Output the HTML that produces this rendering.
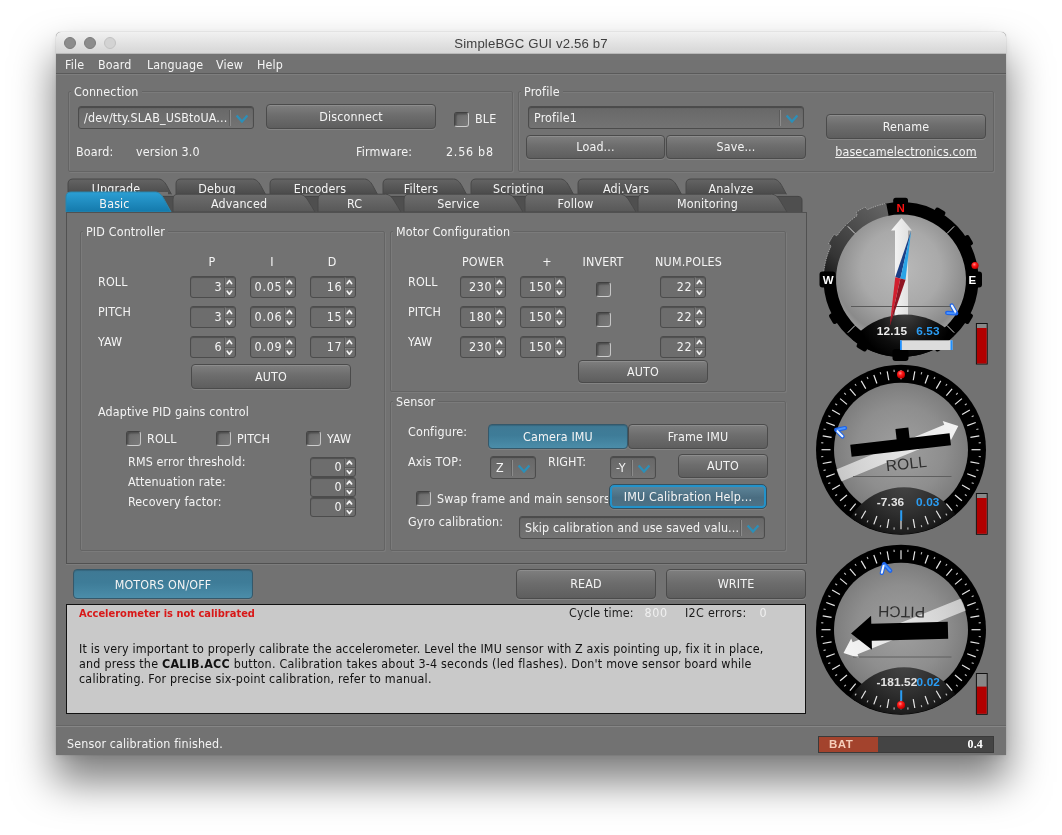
<!DOCTYPE html><html><head><meta charset="utf-8"><title>SimpleBGC GUI v2.56 b7</title><style>
*{box-sizing:border-box}
html,body{margin:0;padding:0}
body{width:1062px;height:835px;background:#fff;position:relative;overflow:hidden;will-change:transform;font-family:"DejaVu Sans Condensed","DejaVu Sans","Liberation Sans",sans-serif;font-size:12.4px;font-stretch:condensed;letter-spacing:.15px;color:#fff}
.abs{position:absolute}
#win{position:absolute;left:56px;top:32px;width:950px;height:723px;background:#727272;border-radius:5px 5px 0 0;box-shadow:0 25px 40px 2px rgba(0,0,0,.5),0 3px 8px rgba(0,0,0,.08),0 0 1px rgba(0,0,0,.45)}
#tb{position:absolute;left:56px;top:32px;width:950px;height:22px;border-radius:5px 5px 0 0;background:linear-gradient(#f1f1f1,#d6d6d6);border-bottom:1px solid #b9b9b9}
#title{position:absolute;left:56px;top:33px;width:950px;height:22px;line-height:22px;text-align:center;color:#404040;font-family:"Liberation Sans",sans-serif;font-size:13.2px}
.tl{position:absolute;top:37px;width:12px;height:12px;border-radius:50%}
.t{position:absolute;white-space:nowrap;line-height:16px;height:16px;color:#f4f4f4}
.c{text-align:center}
.btn{position:absolute;border:1px solid #4b4b4b;border-radius:4px;background:linear-gradient(#7f7f7f,#6d6d6d 45%,#5e5e5e);box-shadow:0 1px 0 rgba(255,255,255,.13),inset 0 1px 0 rgba(255,255,255,.12);text-align:center;color:#f4f4f4;white-space:nowrap}
.btn.blue{background:linear-gradient(#3f7994,#3e7c98 45%,#4b8da9);border-color:#35586a;box-shadow:0 1px 0 rgba(255,255,255,.1),inset 0 1px 1px rgba(0,0,0,.15)}
.btn.focus{background:linear-gradient(#5f879b,#4a6d81 55%,#4d7387);border:1px solid #35505f;border-radius:5px;box-shadow:inset 0 0 0 2px #2292ca,0 1px 0 rgba(255,255,255,.1)}
.grp{position:absolute;border:1px solid #646464;box-shadow:inset 1px 1px 0 rgba(255,255,255,.07),1px 1px 0 rgba(255,255,255,.07);border-radius:2px}
.gt{position:absolute;white-space:nowrap;line-height:16px;height:16px;background:#727272;padding:0 3px;color:#f4f4f4}
.sp{position:absolute;width:46px;height:22px;border:1px solid #4c4c4c;border-radius:3px;background:#6d6d6d;box-shadow:inset 0 1px 1px rgba(0,0,0,.28)}
.sp .v{position:absolute;right:12.6px;top:0;font-size:12.4px;letter-spacing:.75px;color:#f4f4f4}
.sp .d{position:absolute;left:32.5px;top:0;width:1px;height:100%;background:#585858;box-shadow:1px 0 0 rgba(255,255,255,.1)}
.sp .m{position:absolute;left:33.5px;right:0;top:50%;height:1px;background:#5a5a5a;margin-top:-.5px;box-shadow:0 1px 0 rgba(255,255,255,.1)}
.sp svg{position:absolute;left:0;top:0}
.cb{position:absolute;width:15px;height:15px;border-radius:3px;border:1.5px solid;border-color:#404040 #c6c6c6 #cdcdcd #454545;background:linear-gradient(135deg,#6a6a6a,#7a7a7a);box-shadow:inset 1.5px 1.5px 1.5px rgba(0,0,0,.3)}
.combo{position:absolute;height:23px;border:1px solid #4c4c4c;border-radius:3px;background:linear-gradient(#686868,#737373);box-shadow:inset 0 1px 1px rgba(0,0,0,.3)}
.combo .v{position:absolute;left:5px;top:0;line-height:21px;color:#f4f4f4;white-space:nowrap}
.combo .d{position:absolute;right:22.5px;top:3px;bottom:2px;width:1px;background:#8c8c8c;box-shadow:-1px 0 0 rgba(0,0,0,.15)}
.combo svg{position:absolute;right:4px;top:6.5px}
</style></head><body>
<div id="win"></div><div id="tb"></div>
<div id="title">SimpleBGC GUI v2.56 b7</div>
<div class="tl" style="left:64px;background:#8c8c8c;border:1px solid #7c7c7c"></div>
<div class="tl" style="left:84px;background:#8c8c8c;border:1px solid #7c7c7c"></div>
<div class="tl" style="left:104px;background:#d3d3d3;border:1px solid #c2c2c2"></div>
<div class="t " style="left:65px;top:57.0px;">File</div>
<div class="t " style="left:98px;top:57.0px;">Board</div>
<div class="t " style="left:147px;top:57.0px;">Language</div>
<div class="t " style="left:216px;top:57.0px;">View</div>
<div class="t " style="left:257px;top:57.0px;">Help</div>
<div class="abs" style="left:56px;top:73px;width:950px;height:1px;background:#5a5a5a"></div>
<div class="abs" style="left:56px;top:74px;width:950px;height:1px;background:#7e7e7e"></div>
<div class="grp" style="left:68px;top:91px;width:445px;height:81px"></div>
<div class="gt" style="left:71px;top:83.5px">Connection</div>
<div class="combo" style="left:78px;top:106px;width:176px"><span class="v">/dev/tty.SLAB_USBtoUA...</span><i class="d"></i><svg width="14" height="10" viewBox="0 0 14 10"><polyline points="1.6,1.5 7,7.5 12.4,1.5" fill="none" stroke="#2c8fb8" stroke-width="2.3" stroke-linejoin="miter"/></svg></div>
<div class="btn " style="left:266px;top:104px;width:170px;height:25px;line-height:23px">Disconnect</div>
<div class="cb" style="left:454px;top:112px"></div>
<div class="t " style="left:475px;top:111.0px;">BLE</div>
<div class="t " style="left:76px;top:143.8px;">Board:</div>
<div class="t " style="left:136px;top:143.8px;">version 3.0</div>
<div class="t " style="left:356px;top:143.8px;">Firmware:</div>
<div class="t " style="left:446px;top:143.8px;letter-spacing:.75px">2.56 b8</div>
<div class="grp" style="left:518px;top:91px;width:476px;height:81px"></div>
<div class="gt" style="left:521px;top:83.5px">Profile</div>
<div class="combo" style="left:528px;top:106px;width:276px"><span class="v">Profile1</span><i class="d"></i><svg width="14" height="10" viewBox="0 0 14 10"><polyline points="1.6,1.5 7,7.5 12.4,1.5" fill="none" stroke="#2c8fb8" stroke-width="2.3" stroke-linejoin="miter"/></svg></div>
<div class="btn " style="left:526px;top:135px;width:139px;height:24px;line-height:22px">Load...</div>
<div class="btn " style="left:666px;top:135px;width:140px;height:24px;line-height:22px">Save...</div>
<div class="btn " style="left:826px;top:114px;width:160px;height:25px;line-height:23px">Rename</div>
<div class="t c" style="left:826px;width:160px;top:144px;text-decoration:underline">basecamelectronics.com</div>
<svg class="abs" style="left:0;top:0" width="1062" height="230" viewBox="0 0 1062 230"><defs><linearGradient id="tg" x1="0" y1="0" x2="0" y2="1"><stop offset="0" stop-color="#646464"/><stop offset="1" stop-color="#434343"/></linearGradient><linearGradient id="tg2" x1="0" y1="0" x2="0" y2="1"><stop offset="0" stop-color="#6d6d6d"/><stop offset="1" stop-color="#585858"/></linearGradient><linearGradient id="tsel" x1="0" y1="0" x2="0" y2="1"><stop offset="0" stop-color="#2c9fd4"/><stop offset="1" stop-color="#1479ab"/></linearGradient><clipPath id="cu"><path d="M0,170 H1062 V194.2 H168 V192 H0 Z"/></clipPath></defs><g clip-path="url(#cu)"><path d="M686,199 L686,184 Q686,179 691,179 L773.5,179 C777.5,179 780.5,183.0 782.5,187.0 S787,195.0 789,199 Z" fill="url(#tg)" stroke="#484848" stroke-width="1"/><text x="731.0" y="192.5" text-anchor="middle" fill="#f4f4f4" font-size="12.4">Analyze</text><path d="M578,199 L578,184 Q578,179 583,179 L668.5,179 C672.5,179 675.5,183.0 677.5,187.0 S682,195.0 684,199 Z" fill="url(#tg)" stroke="#484848" stroke-width="1"/><text x="626.0" y="192.5" text-anchor="middle" fill="#f4f4f4" font-size="12.4">Adj.Vars</text><path d="M471,199 L471,184 Q471,179 476,179 L560.5,179 C564.5,179 567.5,183.0 569.5,187.0 S574,195.0 576,199 Z" fill="url(#tg)" stroke="#484848" stroke-width="1"/><text x="518.5" y="192.5" text-anchor="middle" fill="#f4f4f4" font-size="12.4">Scripting</text><path d="M383,199 L383,184 Q383,179 388,179 L453.5,179 C457.5,179 460.5,183.0 462.5,187.0 S467,195.0 469,199 Z" fill="url(#tg)" stroke="#484848" stroke-width="1"/><text x="421.0" y="192.5" text-anchor="middle" fill="#f4f4f4" font-size="12.4">Filters</text><path d="M270,199 L270,184 Q270,179 275,179 L364.5,179 C368.5,179 371.5,183.0 373.5,187.0 S378,195.0 380,199 Z" fill="url(#tg)" stroke="#484848" stroke-width="1"/><text x="320.0" y="192.5" text-anchor="middle" fill="#f4f4f4" font-size="12.4">Encoders</text><path d="M176,199 L176,184 Q176,179 181,179 L252.5,179 C256.5,179 259.5,183.0 261.5,187.0 S266,195.0 268,199 Z" fill="url(#tg)" stroke="#484848" stroke-width="1"/><text x="217.0" y="192.5" text-anchor="middle" fill="#f4f4f4" font-size="12.4">Debug</text><path d="M68,199 L68,184 Q68,179 73,179 L158.5,179 C162.5,179 165.5,183.0 167.5,187.0 S172,195.0 174,199 Z" fill="url(#tg)" stroke="#484848" stroke-width="1"/><text x="116.0" y="192.5" text-anchor="middle" fill="#f4f4f4" font-size="12.4">Upgrade</text></g><path d="M150,212.5 L150,196.4 L798,196.4 Q802,196.4 802,200.5 L802,212.5 Z" fill="#4f4f4f" stroke="#444" stroke-width="1"/><path d="M638,212 L638,199.2 Q638,194.2 643,194.2 L771.5,194.2 C775.5,194.2 778.5,197.8 780.5,201.3 S785,208.4 787,212 Z" fill="url(#tg2)" stroke="#484848" stroke-width="1"/><text x="707.5" y="208.3" text-anchor="middle" fill="#f4f4f4" font-size="12.4">Monitoring</text><path d="M525,212 L525,199.2 Q525,194.2 530,194.2 L620.5,194.2 C624.5,194.2 627.5,197.8 629.5,201.3 S634,208.4 636,212 Z" fill="url(#tg2)" stroke="#484848" stroke-width="1"/><text x="575.5" y="208.3" text-anchor="middle" fill="#f4f4f4" font-size="12.4">Follow</text><path d="M404,212 L404,199.2 Q404,194.2 409,194.2 L507.5,194.2 C511.5,194.2 514.5,197.8 516.5,201.3 S521,208.4 523,212 Z" fill="url(#tg2)" stroke="#484848" stroke-width="1"/><text x="458.5" y="208.3" text-anchor="middle" fill="#f4f4f4" font-size="12.4">Service</text><path d="M318,212 L318,199.2 Q318,194.2 323,194.2 L385.5,194.2 C389.5,194.2 392.5,197.8 394.5,201.3 S399,208.4 401,212 Z" fill="url(#tg2)" stroke="#484848" stroke-width="1"/><text x="354.5" y="208.3" text-anchor="middle" fill="#f4f4f4" font-size="12.4">RC</text><path d="M173,212 L173,199.2 Q173,194.2 178,194.2 L299.5,194.2 C303.5,194.2 306.5,197.8 308.5,201.3 S313,208.4 315,212 Z" fill="url(#tg2)" stroke="#484848" stroke-width="1"/><text x="239.0" y="208.3" text-anchor="middle" fill="#f4f4f4" font-size="12.4">Advanced</text><path d="M66,212 L66,197 Q66,192 71,192 L155.5,192 C159.5,192 162.5,196.0 164.5,200.0 S169,208.0 171,212 Z" fill="url(#tsel)" stroke="#2b86ad" stroke-width="1"/><text x="114.5" y="208.3" text-anchor="middle" fill="#f4f4f4" font-size="12.4">Basic</text></svg>
<div class="abs" style="left:66px;top:212px;width:740.5px;height:352px;border:1px solid #515151;border-bottom-width:1.5px;border-right-width:1.5px;background:#727272;box-shadow:0 1px 0 rgba(255,255,255,.08)"></div>
<div class="grp" style="left:80px;top:231px;width:305px;height:320px"></div>
<div class="gt" style="left:83px;top:223.5px">PID Controller</div>
<div class="t c" style="left:152px;width:120px;top:253.8px;">P</div>
<div class="t c" style="left:212px;width:120px;top:253.8px;">I</div>
<div class="t c" style="left:272px;width:120px;top:253.8px;">D</div>
<div class="t " style="left:98px;top:273.8px;">ROLL</div>
<div class="sp" style="left:190px;top:276px;height:22px"><span class="v" style="line-height:20px">3</span><i class="d"></i><i class="m"></i><svg width="44" height="20" viewBox="0 0 44 20"><polyline points="36.2,6.5 38.4,3.5 40.6,6.5" fill="none" stroke="#f4f4f4" stroke-width="1.7" stroke-linecap="round" stroke-linejoin="round"/><polyline points="36.2,14.2 38.4,17.2 40.6,14.2" fill="none" stroke="#f4f4f4" stroke-width="1.7" stroke-linecap="round" stroke-linejoin="round"/></svg></div>
<div class="sp" style="left:250px;top:276px;height:22px"><span class="v" style="line-height:20px">0.05</span><i class="d"></i><i class="m"></i><svg width="44" height="20" viewBox="0 0 44 20"><polyline points="36.2,6.5 38.4,3.5 40.6,6.5" fill="none" stroke="#f4f4f4" stroke-width="1.7" stroke-linecap="round" stroke-linejoin="round"/><polyline points="36.2,14.2 38.4,17.2 40.6,14.2" fill="none" stroke="#f4f4f4" stroke-width="1.7" stroke-linecap="round" stroke-linejoin="round"/></svg></div>
<div class="sp" style="left:310px;top:276px;height:22px"><span class="v" style="line-height:20px">16</span><i class="d"></i><i class="m"></i><svg width="44" height="20" viewBox="0 0 44 20"><polyline points="36.2,6.5 38.4,3.5 40.6,6.5" fill="none" stroke="#f4f4f4" stroke-width="1.7" stroke-linecap="round" stroke-linejoin="round"/><polyline points="36.2,14.2 38.4,17.2 40.6,14.2" fill="none" stroke="#f4f4f4" stroke-width="1.7" stroke-linecap="round" stroke-linejoin="round"/></svg></div>
<div class="t " style="left:98px;top:303.8px;">PITCH</div>
<div class="sp" style="left:190px;top:306px;height:22px"><span class="v" style="line-height:20px">3</span><i class="d"></i><i class="m"></i><svg width="44" height="20" viewBox="0 0 44 20"><polyline points="36.2,6.5 38.4,3.5 40.6,6.5" fill="none" stroke="#f4f4f4" stroke-width="1.7" stroke-linecap="round" stroke-linejoin="round"/><polyline points="36.2,14.2 38.4,17.2 40.6,14.2" fill="none" stroke="#f4f4f4" stroke-width="1.7" stroke-linecap="round" stroke-linejoin="round"/></svg></div>
<div class="sp" style="left:250px;top:306px;height:22px"><span class="v" style="line-height:20px">0.06</span><i class="d"></i><i class="m"></i><svg width="44" height="20" viewBox="0 0 44 20"><polyline points="36.2,6.5 38.4,3.5 40.6,6.5" fill="none" stroke="#f4f4f4" stroke-width="1.7" stroke-linecap="round" stroke-linejoin="round"/><polyline points="36.2,14.2 38.4,17.2 40.6,14.2" fill="none" stroke="#f4f4f4" stroke-width="1.7" stroke-linecap="round" stroke-linejoin="round"/></svg></div>
<div class="sp" style="left:310px;top:306px;height:22px"><span class="v" style="line-height:20px">15</span><i class="d"></i><i class="m"></i><svg width="44" height="20" viewBox="0 0 44 20"><polyline points="36.2,6.5 38.4,3.5 40.6,6.5" fill="none" stroke="#f4f4f4" stroke-width="1.7" stroke-linecap="round" stroke-linejoin="round"/><polyline points="36.2,14.2 38.4,17.2 40.6,14.2" fill="none" stroke="#f4f4f4" stroke-width="1.7" stroke-linecap="round" stroke-linejoin="round"/></svg></div>
<div class="t " style="left:98px;top:333.8px;">YAW</div>
<div class="sp" style="left:190px;top:336px;height:22px"><span class="v" style="line-height:20px">6</span><i class="d"></i><i class="m"></i><svg width="44" height="20" viewBox="0 0 44 20"><polyline points="36.2,6.5 38.4,3.5 40.6,6.5" fill="none" stroke="#f4f4f4" stroke-width="1.7" stroke-linecap="round" stroke-linejoin="round"/><polyline points="36.2,14.2 38.4,17.2 40.6,14.2" fill="none" stroke="#f4f4f4" stroke-width="1.7" stroke-linecap="round" stroke-linejoin="round"/></svg></div>
<div class="sp" style="left:250px;top:336px;height:22px"><span class="v" style="line-height:20px">0.09</span><i class="d"></i><i class="m"></i><svg width="44" height="20" viewBox="0 0 44 20"><polyline points="36.2,6.5 38.4,3.5 40.6,6.5" fill="none" stroke="#f4f4f4" stroke-width="1.7" stroke-linecap="round" stroke-linejoin="round"/><polyline points="36.2,14.2 38.4,17.2 40.6,14.2" fill="none" stroke="#f4f4f4" stroke-width="1.7" stroke-linecap="round" stroke-linejoin="round"/></svg></div>
<div class="sp" style="left:310px;top:336px;height:22px"><span class="v" style="line-height:20px">17</span><i class="d"></i><i class="m"></i><svg width="44" height="20" viewBox="0 0 44 20"><polyline points="36.2,6.5 38.4,3.5 40.6,6.5" fill="none" stroke="#f4f4f4" stroke-width="1.7" stroke-linecap="round" stroke-linejoin="round"/><polyline points="36.2,14.2 38.4,17.2 40.6,14.2" fill="none" stroke="#f4f4f4" stroke-width="1.7" stroke-linecap="round" stroke-linejoin="round"/></svg></div>
<div class="btn " style="left:191px;top:364px;width:160px;height:25px;line-height:23px">AUTO</div>
<div class="t " style="left:98px;top:404.0px;">Adaptive PID gains control</div>
<div class="cb" style="left:126px;top:431px"></div>
<div class="t " style="left:147px;top:430.8px;">ROLL</div>
<div class="cb" style="left:216px;top:431px"></div>
<div class="t " style="left:237px;top:430.8px;">PITCH</div>
<div class="cb" style="left:306px;top:431px"></div>
<div class="t " style="left:327px;top:430.8px;">YAW</div>
<div class="t " style="left:128px;top:453.8px;">RMS error threshold:</div>
<div class="sp" style="left:310px;top:457px;height:20px"><span class="v" style="line-height:18px">0</span><i class="d"></i><i class="m"></i><svg width="44" height="18" viewBox="0 0 44 18"><polyline points="36.2,5.9 38.4,3.1 40.6,5.9" fill="none" stroke="#f4f4f4" stroke-width="1.7" stroke-linecap="round" stroke-linejoin="round"/><polyline points="36.2,12.8 38.4,15.5 40.6,12.8" fill="none" stroke="#f4f4f4" stroke-width="1.7" stroke-linecap="round" stroke-linejoin="round"/></svg></div>
<div class="t " style="left:128px;top:473.8px;">Attenuation rate:</div>
<div class="sp" style="left:310px;top:477px;height:20px"><span class="v" style="line-height:18px">0</span><i class="d"></i><i class="m"></i><svg width="44" height="18" viewBox="0 0 44 18"><polyline points="36.2,5.9 38.4,3.1 40.6,5.9" fill="none" stroke="#f4f4f4" stroke-width="1.7" stroke-linecap="round" stroke-linejoin="round"/><polyline points="36.2,12.8 38.4,15.5 40.6,12.8" fill="none" stroke="#f4f4f4" stroke-width="1.7" stroke-linecap="round" stroke-linejoin="round"/></svg></div>
<div class="t " style="left:128px;top:493.8px;">Recovery factor:</div>
<div class="sp" style="left:310px;top:497px;height:20px"><span class="v" style="line-height:18px">0</span><i class="d"></i><i class="m"></i><svg width="44" height="18" viewBox="0 0 44 18"><polyline points="36.2,5.9 38.4,3.1 40.6,5.9" fill="none" stroke="#f4f4f4" stroke-width="1.7" stroke-linecap="round" stroke-linejoin="round"/><polyline points="36.2,12.8 38.4,15.5 40.6,12.8" fill="none" stroke="#f4f4f4" stroke-width="1.7" stroke-linecap="round" stroke-linejoin="round"/></svg></div>
<div class="grp" style="left:390px;top:231px;width:396px;height:161px"></div>
<div class="gt" style="left:393px;top:223.5px">Motor Configuration</div>
<div class="t c" style="left:423px;width:120px;top:253.8px;">POWER</div>
<div class="t c" style="left:487px;width:120px;top:253.8px;">+</div>
<div class="t c" style="left:543px;width:120px;top:253.8px;">INVERT</div>
<div class="t c" style="left:628.5px;width:120px;top:253.8px;">NUM.POLES</div>
<div class="t " style="left:408px;top:273.8px;">ROLL</div>
<div class="sp" style="left:460px;top:276px;height:22px"><span class="v" style="line-height:20px">230</span><i class="d"></i><i class="m"></i><svg width="44" height="20" viewBox="0 0 44 20"><polyline points="36.2,6.5 38.4,3.5 40.6,6.5" fill="none" stroke="#f4f4f4" stroke-width="1.7" stroke-linecap="round" stroke-linejoin="round"/><polyline points="36.2,14.2 38.4,17.2 40.6,14.2" fill="none" stroke="#f4f4f4" stroke-width="1.7" stroke-linecap="round" stroke-linejoin="round"/></svg></div>
<div class="sp" style="left:520px;top:276px;height:22px"><span class="v" style="line-height:20px">150</span><i class="d"></i><i class="m"></i><svg width="44" height="20" viewBox="0 0 44 20"><polyline points="36.2,6.5 38.4,3.5 40.6,6.5" fill="none" stroke="#f4f4f4" stroke-width="1.7" stroke-linecap="round" stroke-linejoin="round"/><polyline points="36.2,14.2 38.4,17.2 40.6,14.2" fill="none" stroke="#f4f4f4" stroke-width="1.7" stroke-linecap="round" stroke-linejoin="round"/></svg></div>
<div class="cb" style="left:596px;top:282px"></div>
<div class="sp" style="left:660px;top:276px;height:22px"><span class="v" style="line-height:20px">22</span><i class="d"></i><i class="m"></i><svg width="44" height="20" viewBox="0 0 44 20"><polyline points="36.2,6.5 38.4,3.5 40.6,6.5" fill="none" stroke="#f4f4f4" stroke-width="1.7" stroke-linecap="round" stroke-linejoin="round"/><polyline points="36.2,14.2 38.4,17.2 40.6,14.2" fill="none" stroke="#f4f4f4" stroke-width="1.7" stroke-linecap="round" stroke-linejoin="round"/></svg></div>
<div class="t " style="left:408px;top:303.8px;">PITCH</div>
<div class="sp" style="left:460px;top:306px;height:22px"><span class="v" style="line-height:20px">180</span><i class="d"></i><i class="m"></i><svg width="44" height="20" viewBox="0 0 44 20"><polyline points="36.2,6.5 38.4,3.5 40.6,6.5" fill="none" stroke="#f4f4f4" stroke-width="1.7" stroke-linecap="round" stroke-linejoin="round"/><polyline points="36.2,14.2 38.4,17.2 40.6,14.2" fill="none" stroke="#f4f4f4" stroke-width="1.7" stroke-linecap="round" stroke-linejoin="round"/></svg></div>
<div class="sp" style="left:520px;top:306px;height:22px"><span class="v" style="line-height:20px">150</span><i class="d"></i><i class="m"></i><svg width="44" height="20" viewBox="0 0 44 20"><polyline points="36.2,6.5 38.4,3.5 40.6,6.5" fill="none" stroke="#f4f4f4" stroke-width="1.7" stroke-linecap="round" stroke-linejoin="round"/><polyline points="36.2,14.2 38.4,17.2 40.6,14.2" fill="none" stroke="#f4f4f4" stroke-width="1.7" stroke-linecap="round" stroke-linejoin="round"/></svg></div>
<div class="cb" style="left:596px;top:312px"></div>
<div class="sp" style="left:660px;top:306px;height:22px"><span class="v" style="line-height:20px">22</span><i class="d"></i><i class="m"></i><svg width="44" height="20" viewBox="0 0 44 20"><polyline points="36.2,6.5 38.4,3.5 40.6,6.5" fill="none" stroke="#f4f4f4" stroke-width="1.7" stroke-linecap="round" stroke-linejoin="round"/><polyline points="36.2,14.2 38.4,17.2 40.6,14.2" fill="none" stroke="#f4f4f4" stroke-width="1.7" stroke-linecap="round" stroke-linejoin="round"/></svg></div>
<div class="t " style="left:408px;top:333.8px;">YAW</div>
<div class="sp" style="left:460px;top:336px;height:22px"><span class="v" style="line-height:20px">230</span><i class="d"></i><i class="m"></i><svg width="44" height="20" viewBox="0 0 44 20"><polyline points="36.2,6.5 38.4,3.5 40.6,6.5" fill="none" stroke="#f4f4f4" stroke-width="1.7" stroke-linecap="round" stroke-linejoin="round"/><polyline points="36.2,14.2 38.4,17.2 40.6,14.2" fill="none" stroke="#f4f4f4" stroke-width="1.7" stroke-linecap="round" stroke-linejoin="round"/></svg></div>
<div class="sp" style="left:520px;top:336px;height:22px"><span class="v" style="line-height:20px">150</span><i class="d"></i><i class="m"></i><svg width="44" height="20" viewBox="0 0 44 20"><polyline points="36.2,6.5 38.4,3.5 40.6,6.5" fill="none" stroke="#f4f4f4" stroke-width="1.7" stroke-linecap="round" stroke-linejoin="round"/><polyline points="36.2,14.2 38.4,17.2 40.6,14.2" fill="none" stroke="#f4f4f4" stroke-width="1.7" stroke-linecap="round" stroke-linejoin="round"/></svg></div>
<div class="cb" style="left:596px;top:342px"></div>
<div class="sp" style="left:660px;top:336px;height:22px"><span class="v" style="line-height:20px">22</span><i class="d"></i><i class="m"></i><svg width="44" height="20" viewBox="0 0 44 20"><polyline points="36.2,6.5 38.4,3.5 40.6,6.5" fill="none" stroke="#f4f4f4" stroke-width="1.7" stroke-linecap="round" stroke-linejoin="round"/><polyline points="36.2,14.2 38.4,17.2 40.6,14.2" fill="none" stroke="#f4f4f4" stroke-width="1.7" stroke-linecap="round" stroke-linejoin="round"/></svg></div>
<div class="btn " style="left:578px;top:360px;width:130px;height:23px;line-height:21px">AUTO</div>
<div class="grp" style="left:390px;top:401px;width:396px;height:150px"></div>
<div class="gt" style="left:393px;top:393.5px">Sensor</div>
<div class="t " style="left:408px;top:423.8px;">Configure:</div>
<div class="btn blue" style="left:488px;top:424px;width:140px;height:25px;line-height:23px">Camera IMU</div>
<div class="btn " style="left:628px;top:424px;width:140px;height:25px;line-height:23px">Frame IMU</div>
<div class="t " style="left:408px;top:453.8px;">Axis TOP:</div>
<div class="combo" style="left:490px;top:456px;width:46px"><span class="v">Z</span><i class="d"></i><svg width="14" height="10" viewBox="0 0 14 10"><polyline points="1.6,1.5 7,7.5 12.4,1.5" fill="none" stroke="#2c8fb8" stroke-width="2.3" stroke-linejoin="miter"/></svg></div>
<div class="t " style="left:548px;top:453.8px;">RIGHT:</div>
<div class="combo" style="left:610px;top:456px;width:46px"><span class="v">-Y</span><i class="d"></i><svg width="14" height="10" viewBox="0 0 14 10"><polyline points="1.6,1.5 7,7.5 12.4,1.5" fill="none" stroke="#2c8fb8" stroke-width="2.3" stroke-linejoin="miter"/></svg></div>
<div class="btn " style="left:678px;top:454px;width:90px;height:24px;line-height:22px">AUTO</div>
<div class="cb" style="left:416px;top:491px"></div>
<div class="t" style="left:437px;top:490.5px;width:171px;overflow:hidden">Swap frame and main sensors</div>
<div class="btn focus" style="left:609px;top:484px;width:158px;height:25px;line-height:23px">IMU Calibration Help...</div>
<div class="t " style="left:408px;top:513.8px;">Gyro calibration:</div>
<div class="combo" style="left:519px;top:516px;width:246px"><span class="v">Skip calibration and use saved valu...</span><i class="d"></i><svg width="14" height="10" viewBox="0 0 14 10"><polyline points="1.6,1.5 7,7.5 12.4,1.5" fill="none" stroke="#2c8fb8" stroke-width="2.3" stroke-linejoin="miter"/></svg></div>
<div class="btn blue" style="left:73px;top:569px;width:180px;height:30px;line-height:28px"><span style="position:relative;top:1px">MOTORS ON/OFF</span></div>
<div class="btn " style="left:516px;top:569px;width:140px;height:30px;line-height:28px">READ</div>
<div class="btn " style="left:666px;top:569px;width:140px;height:30px;line-height:28px">WRITE</div>
<div class="abs" style="left:66px;top:604px;width:740px;height:110px;border:1px solid #111;background:#c9c9c9"></div>
<div class="t" style="left:79px;top:605.5px;color:#d81818;font-weight:bold;font-size:11px;letter-spacing:0">Accelerometer is not calibrated</div>
<div class="t " style="left:569px;top:605.0px;color:#1c1c1c">Cycle time:</div>
<div class="t " style="left:644.5px;top:605.0px;color:#f0f0f0;letter-spacing:.6px">800</div>
<div class="t " style="left:685px;top:605.0px;color:#1c1c1c;letter-spacing:.3px">I2C errors:</div>
<div class="t " style="left:759.5px;top:605.0px;color:#f0f0f0">0</div>
<div class="abs" style="left:79px;top:641px;width:720px;line-height:15px;color:#111;white-space:nowrap">It is very important to properly calibrate the accelerometer. Level the IMU sensor with Z axis pointing up, fix it in place,<br><span style="letter-spacing:.235px">and press the <b>CALIB.ACC</b> button. Calibration takes about 3-4 seconds (led flashes). Don't move sensor board while</span><br><span style="letter-spacing:.22px">calibrating. For precise six-point calibration, refer to manual.</span></div>
<div class="abs" style="left:56px;top:725px;width:950px;height:1px;background:#666"></div><div class="abs" style="left:56px;top:726px;width:950px;height:1px;background:#868686"></div>
<div class="t " style="left:67px;top:736.3px;">Sensor calibration finished.</div>
<div class="abs" style="left:818px;top:736px;width:176px;height:17px;background:#444;border:1px solid #3a3a3a"><div class="abs" style="left:0;top:0;width:59px;height:15px;background:#a3432d"></div><div class="abs" style="left:10px;top:0;line-height:15px;font:bold 11.5px/15px 'Liberation Sans',sans-serif;letter-spacing:.55px;color:#f6cdb9">BAT</div><div class="abs" style="right:10px;top:0;font:bold 12px/15px 'Liberation Serif',serif;color:#fff">0.4</div></div>
<svg class="abs" style="left:0;top:0" width="1062" height="835" viewBox="0 0 1062 835" font-family="'Liberation Sans',sans-serif"><defs><radialGradient id="dc" cx=".5" cy=".42" r=".55"><stop offset="0" stop-color="#b9b9b9"/><stop offset=".55" stop-color="#a9a9a9"/><stop offset=".92" stop-color="#8a8a8a"/><stop offset="1" stop-color="#9a9a9a"/></radialGradient><radialGradient id="dr" cx=".5" cy=".5" r=".55"><stop offset="0" stop-color="#9f9f9f"/><stop offset=".6" stop-color="#8e8e8e"/><stop offset="1" stop-color="#787878"/></radialGradient><radialGradient id="lg1" gradientUnits="userSpaceOnUse" cx="905" cy="312" r="48"><stop offset="0" stop-color="#424242"/><stop offset=".35" stop-color="#282828"/><stop offset=".7" stop-color="#0d0d0d"/><stop offset="1" stop-color="#000"/></radialGradient><radialGradient id="lg2" gradientUnits="userSpaceOnUse" cx="904" cy="482" r="62"><stop offset="0" stop-color="#464646"/><stop offset=".5" stop-color="#303030"/><stop offset=".8" stop-color="#1f1f1f"/><stop offset="1" stop-color="#0a0a0a"/></radialGradient><radialGradient id="lg3" gradientUnits="userSpaceOnUse" cx="904" cy="662" r="62"><stop offset="0" stop-color="#464646"/><stop offset=".5" stop-color="#303030"/><stop offset=".8" stop-color="#1f1f1f"/><stop offset="1" stop-color="#0a0a0a"/></radialGradient><linearGradient id="lg" x1="0" y1="0" x2="0" y2="1"><stop offset="0" stop-color="#3c3c3c"/><stop offset=".5" stop-color="#161616"/><stop offset="1" stop-color="#000"/></linearGradient><linearGradient id="qg" gradientUnits="userSpaceOnUse" x1="826" y1="282" x2="893" y2="205"><stop offset="0" stop-color="#121212"/><stop offset=".25" stop-color="#353535"/><stop offset=".6" stop-color="#4d4d4d"/><stop offset="1" stop-color="#686868"/></linearGradient><linearGradient id="wa" x1="0" y1="0" x2="1" y2="0"><stop offset="0" stop-color="#fff"/><stop offset="1" stop-color="#e2e2e2"/></linearGradient><linearGradient id="wf" x1="0" y1="0" x2="0" y2="1"><stop offset="0" stop-color="#fbfbfb" stop-opacity=".95"/><stop offset=".45" stop-color="#f2f2f2" stop-opacity=".85"/><stop offset="1" stop-color="#ececec" stop-opacity=".66"/></linearGradient><clipPath id="o1"><circle cx="901" cy="279.5" r="77.5"/></clipPath><clipPath id="o2"><circle cx="901" cy="449.7" r="84.5"/></clipPath><clipPath id="o3"><circle cx="901" cy="629.7" r="84.5"/></clipPath><radialGradient id="rd" cx=".4" cy=".35" r=".6"><stop offset="0" stop-color="#ff8a8a"/><stop offset=".45" stop-color="#ff1a1a"/><stop offset="1" stop-color="#c80000"/></radialGradient><clipPath id="c1"><circle cx="901" cy="279.5" r="65.5"/></clipPath><clipPath id="c2"><circle cx="901" cy="449.7" r="67.5"/></clipPath><clipPath id="c3"><circle cx="901" cy="629.7" r="67.5"/></clipPath></defs><circle cx="901" cy="279.5" r="66" fill="url(#dc)"/><path d="M901.5,218 L912,230.5 L908,230.5 L908,318 L895,318 L895,230.5 L891,230.5 Z" fill="url(#wa)" opacity=".9"/><line x1="851" y1="306.5" x2="952.5" y2="306.5" stroke="#5a5a5a" stroke-width="1"/><path d="M884.89,203.69 A77.5,77.5 0 1 1 823.55,276.80 L836.04,277.23 A65,65 0 1 0 887.49,215.92 Z" fill="#000"/><path d="M823.51,278.15 A77.5,77.5 0 0 1 831.17,245.89 L829.46,244.61 Q828.38,244.08 829.20,242.44 A80.8,80.8 0 0 1 833.01,235.85 Q834.01,234.32 835.01,234.99 L836.98,235.83 A77.5,77.5 0 0 1 857.33,215.48 L856.49,213.51 Q855.82,212.51 857.35,211.51 A80.8,80.8 0 0 1 863.94,207.70 Q865.58,206.88 866.11,207.96 L867.39,209.67 A77.5,77.5 0 0 1 886.21,203.42 L888.60,215.69 A65,65 0 0 0 836.01,278.37 Z" fill="url(#qg)"/><path d="M823.61,275.44 A77.5,77.5 0 0 1 831.17,245.89 L829.46,244.61 Q828.38,244.08 829.20,242.44 A80.8,80.8 0 0 1 833.01,235.85 Q834.01,234.32 835.01,234.99 L836.98,235.83 A77.5,77.5 0 0 1 857.33,215.48 L856.49,213.51 Q855.82,212.51 857.35,211.51 A80.8,80.8 0 0 1 863.94,207.70 Q865.58,206.88 866.11,207.96 L867.39,209.67 A77.5,77.5 0 0 1 884.89,203.69" fill="none" stroke="#cfcfcf" stroke-width=".8" stroke-dasharray="1.1,1.3" opacity=".85"/><g clip-path="url(#o1)"><circle cx="905" cy="382.6" r="68" fill="url(#lg1)"/></g><g transform="translate(901,279.5) rotate(30)"><rect x="-5.6" y="-80.8" width="11.2" height="8" rx="2.2" fill="#000"/></g><g transform="translate(901,279.5) rotate(60)"><rect x="-5.6" y="-80.8" width="11.2" height="8" rx="2.2" fill="#000"/></g><g transform="translate(901,279.5) rotate(120)"><rect x="-5.6" y="-80.8" width="11.2" height="8" rx="2.2" fill="#000"/></g><g transform="translate(901,279.5) rotate(150)"><rect x="-5.6" y="-80.8" width="11.2" height="8" rx="2.2" fill="#000"/></g><g transform="translate(901,279.5) rotate(210)"><rect x="-5.6" y="-80.8" width="11.2" height="8" rx="2.2" fill="#000"/></g><g transform="translate(901,279.5) rotate(240)"><rect x="-5.6" y="-80.8" width="11.2" height="8" rx="2.2" fill="#000"/></g><rect x="893.2" y="197.8" width="14.8" height="16" rx="2.5" fill="#000"/><rect x="892.5" y="349.0" width="16" height="12" rx="3" fill="#000"/><rect x="819.5" y="271.5" width="16" height="16" rx="3" fill="#000"/><rect x="966" y="271.5" width="16" height="16" rx="3" fill="#000"/><line x1="946.96" y1="233.54" x2="954.17" y2="226.33" stroke="#e8e8e8" stroke-width=".9"/><line x1="946.96" y1="325.46" x2="954.17" y2="332.67" stroke="#e8e8e8" stroke-width=".9"/><line x1="855.04" y1="325.46" x2="847.83" y2="332.67" stroke="#e8e8e8" stroke-width=".9"/><line x1="855.04" y1="233.54" x2="847.83" y2="226.33" stroke="#e8e8e8" stroke-width=".9"/><text x="900.7" y="212" text-anchor="middle" font-size="11.5" font-weight="bold" fill="#ff1010">N</text><text x="828.3" y="283.7" text-anchor="middle" font-size="11.5" font-weight="bold" fill="#fff">W</text><text x="972.3" y="283.7" text-anchor="middle" font-size="11.5" font-weight="bold" fill="#fff">E</text><g transform="translate(900.4,278.5) rotate(12.58)"><path d="M0,-49 L0,0 L-5.3,0 Z" fill="#1b3f86"/><path d="M0,-49 L5.3,0 L0,0 Z" fill="#2aa3e6"/><path d="M0,49 L0,0 L-5.3,0 Z" fill="#d21f2f"/><path d="M0,49 L5.3,0 L0,0 Z" fill="#8f1422"/></g><text x="892" y="335" text-anchor="middle" font-size="11.8" font-weight="bold" fill="#ececec">12.15</text><text x="928" y="335" text-anchor="middle" font-size="11.8" font-weight="bold" fill="#2a9df4">6.53</text><rect x="900" y="340.3" width="52.5" height="9.7" fill="#dcdcdc"/><rect x="900" y="340.3" width="1.8" height="9.7" fill="#1e90ff"/><rect x="950.5" y="340.3" width="2" height="9.7" fill="#1e90ff"/><g transform="translate(957.27,313.98) rotate(121.5)" fill="none" stroke-linecap="round" stroke-linejoin="round"><polyline points="4.4,9.2 0,1.2 -4.4,9.2" stroke="#1d63ea" stroke-width="4.2"/><line x1="0.6" y1="2.2" x2="4.3" y2="9" stroke="#4a95ff" stroke-width="1.9"/><line x1="-0.9" y1="2.8" x2="-4.3" y2="9" stroke="#edf6ff" stroke-width="2.1"/></g><circle cx="975" cy="265.5" r="3.6" fill="url(#rd)"/><rect x="976.4" y="323.5" width="10.8" height="40.5" fill="#888" stroke="#111" stroke-width="1"/><rect x="976.9" y="328" width="9.8" height="35.5" fill="#b20000"/><circle cx="901" cy="449.7" r="85" fill="#000"/><circle cx="901" cy="449.7" r="67" fill="url(#dr)"/><g clip-path="url(#c2)"><g transform="translate(901,449.7) rotate(67.5)"><path d="M0,-62 L10.5,-49.5 L6.5,-49.5 L6.5,70 L-6.5,70 L-6.5,-49.5 L-10.5,-49.5 Z" fill="url(#wf)"/></g></g><line x1="853" y1="476.5" x2="951.5" y2="476.5" stroke="#5f5f5f" stroke-width="1"/><text transform="translate(907,469) rotate(-6.5)" text-anchor="middle" font-size="15.5" fill="#2e2e2e">ROLL</text><g transform="translate(900.6,445) rotate(-6.6)"><rect x="-50" y="-6" width="100" height="12" fill="#000"/><rect x="-3.3" y="-16.5" width="13" height="11.5" fill="#000"/></g><g clip-path="url(#o2)"><circle cx="904" cy="549.7" r="62.5" fill="url(#lg2)"/></g><line x1="901.00" y1="379.20" x2="901.00" y2="370.20" stroke="#e6e6e6" stroke-width="1.2"/><line x1="907.80" y1="372.00" x2="907.99" y2="369.81" stroke="#bdbdbd" stroke-width="1.1"/><line x1="913.24" y1="380.27" x2="914.81" y2="371.41" stroke="#e6e6e6" stroke-width="1.2"/><line x1="921.19" y1="374.36" x2="921.76" y2="372.23" stroke="#bdbdbd" stroke-width="1.1"/><line x1="925.11" y1="383.45" x2="928.19" y2="374.99" stroke="#e6e6e6" stroke-width="1.2"/><line x1="933.96" y1="379.01" x2="934.89" y2="377.01" stroke="#bdbdbd" stroke-width="1.1"/><line x1="936.25" y1="388.65" x2="940.75" y2="380.85" stroke="#e6e6e6" stroke-width="1.2"/><line x1="945.74" y1="385.81" x2="947.00" y2="384.00" stroke="#bdbdbd" stroke-width="1.1"/><line x1="946.32" y1="395.69" x2="952.10" y2="388.80" stroke="#e6e6e6" stroke-width="1.2"/><line x1="956.15" y1="394.55" x2="957.71" y2="392.99" stroke="#bdbdbd" stroke-width="1.1"/><line x1="955.01" y1="404.38" x2="961.90" y2="398.60" stroke="#e6e6e6" stroke-width="1.2"/><line x1="964.89" y1="404.96" x2="966.70" y2="403.70" stroke="#bdbdbd" stroke-width="1.1"/><line x1="962.05" y1="414.45" x2="969.85" y2="409.95" stroke="#e6e6e6" stroke-width="1.2"/><line x1="971.69" y1="416.74" x2="973.69" y2="415.81" stroke="#bdbdbd" stroke-width="1.1"/><line x1="967.25" y1="425.59" x2="975.71" y2="422.51" stroke="#e6e6e6" stroke-width="1.2"/><line x1="976.34" y1="429.51" x2="978.47" y2="428.94" stroke="#bdbdbd" stroke-width="1.1"/><line x1="970.43" y1="437.46" x2="979.29" y2="435.89" stroke="#e6e6e6" stroke-width="1.2"/><line x1="978.70" y1="442.90" x2="980.89" y2="442.71" stroke="#bdbdbd" stroke-width="1.1"/><line x1="971.50" y1="449.70" x2="980.50" y2="449.70" stroke="#e6e6e6" stroke-width="1.2"/><line x1="978.70" y1="456.50" x2="980.89" y2="456.69" stroke="#bdbdbd" stroke-width="1.1"/><line x1="970.43" y1="461.94" x2="979.29" y2="463.51" stroke="#e6e6e6" stroke-width="1.2"/><line x1="976.34" y1="469.89" x2="978.47" y2="470.46" stroke="#bdbdbd" stroke-width="1.1"/><line x1="967.25" y1="473.81" x2="975.71" y2="476.89" stroke="#e6e6e6" stroke-width="1.2"/><line x1="971.69" y1="482.66" x2="973.69" y2="483.59" stroke="#bdbdbd" stroke-width="1.1"/><line x1="962.05" y1="484.95" x2="969.85" y2="489.45" stroke="#e6e6e6" stroke-width="1.2"/><line x1="964.89" y1="494.44" x2="966.70" y2="495.70" stroke="#bdbdbd" stroke-width="1.1"/><line x1="955.01" y1="495.02" x2="961.90" y2="500.80" stroke="#e6e6e6" stroke-width="1.2"/><line x1="956.15" y1="504.85" x2="957.71" y2="506.41" stroke="#bdbdbd" stroke-width="1.1"/><line x1="946.32" y1="503.71" x2="952.10" y2="510.60" stroke="#e6e6e6" stroke-width="1.2"/><line x1="945.74" y1="513.59" x2="947.00" y2="515.40" stroke="#bdbdbd" stroke-width="1.1"/><line x1="936.25" y1="510.75" x2="940.75" y2="518.55" stroke="#e6e6e6" stroke-width="1.2"/><line x1="933.96" y1="520.39" x2="934.89" y2="522.39" stroke="#bdbdbd" stroke-width="1.1"/><line x1="925.11" y1="515.95" x2="928.19" y2="524.41" stroke="#e6e6e6" stroke-width="1.2"/><line x1="921.19" y1="525.04" x2="921.76" y2="527.17" stroke="#bdbdbd" stroke-width="1.1"/><line x1="913.24" y1="519.13" x2="914.81" y2="527.99" stroke="#e6e6e6" stroke-width="1.2"/><line x1="907.80" y1="527.40" x2="907.99" y2="529.59" stroke="#bdbdbd" stroke-width="1.1"/><line x1="901.00" y1="520.20" x2="901.00" y2="529.20" stroke="#e6e6e6" stroke-width="1.2"/><line x1="894.20" y1="527.40" x2="894.01" y2="529.59" stroke="#bdbdbd" stroke-width="1.1"/><line x1="888.76" y1="519.13" x2="887.19" y2="527.99" stroke="#e6e6e6" stroke-width="1.2"/><line x1="880.81" y1="525.04" x2="880.24" y2="527.17" stroke="#bdbdbd" stroke-width="1.1"/><line x1="876.89" y1="515.95" x2="873.81" y2="524.41" stroke="#e6e6e6" stroke-width="1.2"/><line x1="868.04" y1="520.39" x2="867.11" y2="522.39" stroke="#bdbdbd" stroke-width="1.1"/><line x1="865.75" y1="510.75" x2="861.25" y2="518.55" stroke="#e6e6e6" stroke-width="1.2"/><line x1="856.26" y1="513.59" x2="855.00" y2="515.40" stroke="#bdbdbd" stroke-width="1.1"/><line x1="855.68" y1="503.71" x2="849.90" y2="510.60" stroke="#e6e6e6" stroke-width="1.2"/><line x1="845.85" y1="504.85" x2="844.29" y2="506.41" stroke="#bdbdbd" stroke-width="1.1"/><line x1="846.99" y1="495.02" x2="840.10" y2="500.80" stroke="#e6e6e6" stroke-width="1.2"/><line x1="837.11" y1="494.44" x2="835.30" y2="495.70" stroke="#bdbdbd" stroke-width="1.1"/><line x1="839.95" y1="484.95" x2="832.15" y2="489.45" stroke="#e6e6e6" stroke-width="1.2"/><line x1="830.31" y1="482.66" x2="828.31" y2="483.59" stroke="#bdbdbd" stroke-width="1.1"/><line x1="834.75" y1="473.81" x2="826.29" y2="476.89" stroke="#e6e6e6" stroke-width="1.2"/><line x1="825.66" y1="469.89" x2="823.53" y2="470.46" stroke="#bdbdbd" stroke-width="1.1"/><line x1="831.57" y1="461.94" x2="822.71" y2="463.51" stroke="#e6e6e6" stroke-width="1.2"/><line x1="823.30" y1="456.50" x2="821.11" y2="456.69" stroke="#bdbdbd" stroke-width="1.1"/><line x1="830.50" y1="449.70" x2="821.50" y2="449.70" stroke="#e6e6e6" stroke-width="1.2"/><line x1="823.30" y1="442.90" x2="821.11" y2="442.71" stroke="#bdbdbd" stroke-width="1.1"/><line x1="831.57" y1="437.46" x2="822.71" y2="435.89" stroke="#e6e6e6" stroke-width="1.2"/><line x1="825.66" y1="429.51" x2="823.53" y2="428.94" stroke="#bdbdbd" stroke-width="1.1"/><line x1="834.75" y1="425.59" x2="826.29" y2="422.51" stroke="#e6e6e6" stroke-width="1.2"/><line x1="830.31" y1="416.74" x2="828.31" y2="415.81" stroke="#bdbdbd" stroke-width="1.1"/><line x1="839.95" y1="414.45" x2="832.15" y2="409.95" stroke="#e6e6e6" stroke-width="1.2"/><line x1="837.11" y1="404.96" x2="835.30" y2="403.70" stroke="#bdbdbd" stroke-width="1.1"/><line x1="846.99" y1="404.38" x2="840.10" y2="398.60" stroke="#e6e6e6" stroke-width="1.2"/><line x1="845.85" y1="394.55" x2="844.29" y2="392.99" stroke="#bdbdbd" stroke-width="1.1"/><line x1="855.68" y1="395.69" x2="849.90" y2="388.80" stroke="#e6e6e6" stroke-width="1.2"/><line x1="856.26" y1="385.81" x2="855.00" y2="384.00" stroke="#bdbdbd" stroke-width="1.1"/><line x1="865.75" y1="388.65" x2="861.25" y2="380.85" stroke="#e6e6e6" stroke-width="1.2"/><line x1="868.04" y1="379.01" x2="867.11" y2="377.01" stroke="#bdbdbd" stroke-width="1.1"/><line x1="876.89" y1="383.45" x2="873.81" y2="374.99" stroke="#e6e6e6" stroke-width="1.2"/><line x1="880.81" y1="374.36" x2="880.24" y2="372.23" stroke="#bdbdbd" stroke-width="1.1"/><line x1="888.76" y1="380.27" x2="887.19" y2="371.41" stroke="#e6e6e6" stroke-width="1.2"/><line x1="894.20" y1="372.00" x2="894.01" y2="369.81" stroke="#bdbdbd" stroke-width="1.1"/><text x="890.5" y="505.6" text-anchor="middle" font-size="11.8" font-weight="bold" fill="#e4e4e4">-7.36</text><text x="927.8" y="505.6" text-anchor="middle" font-size="11.8" font-weight="bold" fill="#2a9df4">0.03</text><rect x="900.2" y="510.3" width="2" height="10.5" fill="#2a9df4"/><circle cx="901" cy="374.4" r="4" fill="url(#rd)"/><g transform="translate(835.01,429.53) rotate(-73)" fill="none" stroke-linecap="round" stroke-linejoin="round"><polyline points="4.4,9.2 0,1.2 -4.4,9.2" stroke="#1d63ea" stroke-width="4.2"/><line x1="0.6" y1="2.2" x2="4.3" y2="9" stroke="#4a95ff" stroke-width="1.9"/><line x1="-0.9" y1="2.8" x2="-4.3" y2="9" stroke="#edf6ff" stroke-width="2.1"/></g><rect x="976.4" y="493.5" width="10.8" height="40.799999999999955" fill="#888" stroke="#111" stroke-width="1"/><rect x="976.9" y="498" width="9.8" height="35.799999999999955" fill="#b20000"/><circle cx="901" cy="629.7" r="85" fill="#000"/><circle cx="901" cy="629.7" r="67" fill="url(#dr)"/><g clip-path="url(#c3)"><g transform="translate(901,629.7) rotate(248)"><path d="M0,-62 L10.5,-49.5 L6.5,-49.5 L6.5,70 L-6.5,70 L-6.5,-49.5 L-10.5,-49.5 Z" fill="url(#wf)"/></g></g><line x1="853" y1="657" x2="951.5" y2="657" stroke="#5f5f5f" stroke-width="1"/><text transform="translate(901.7,606.5) rotate(181.5)" text-anchor="middle" font-size="15.5" fill="#2e2e2e">PITCH</text><g transform="translate(899.5,631.5) rotate(-1.5)"><path d="M48.5,-8.5 L48.5,8.5 L-28,8.5 L-28,17.5 L-48.5,0.8 L-28,-16.5 L-28,-8.5 Z" fill="#000"/></g><g clip-path="url(#o3)"><circle cx="904" cy="729.7" r="62.5" fill="url(#lg3)"/></g><line x1="901.00" y1="559.20" x2="901.00" y2="550.20" stroke="#e6e6e6" stroke-width="1.2"/><line x1="907.80" y1="552.00" x2="907.99" y2="549.81" stroke="#bdbdbd" stroke-width="1.1"/><line x1="913.24" y1="560.27" x2="914.81" y2="551.41" stroke="#e6e6e6" stroke-width="1.2"/><line x1="921.19" y1="554.36" x2="921.76" y2="552.23" stroke="#bdbdbd" stroke-width="1.1"/><line x1="925.11" y1="563.45" x2="928.19" y2="554.99" stroke="#e6e6e6" stroke-width="1.2"/><line x1="933.96" y1="559.01" x2="934.89" y2="557.01" stroke="#bdbdbd" stroke-width="1.1"/><line x1="936.25" y1="568.65" x2="940.75" y2="560.85" stroke="#e6e6e6" stroke-width="1.2"/><line x1="945.74" y1="565.81" x2="947.00" y2="564.00" stroke="#bdbdbd" stroke-width="1.1"/><line x1="946.32" y1="575.69" x2="952.10" y2="568.80" stroke="#e6e6e6" stroke-width="1.2"/><line x1="956.15" y1="574.55" x2="957.71" y2="572.99" stroke="#bdbdbd" stroke-width="1.1"/><line x1="955.01" y1="584.38" x2="961.90" y2="578.60" stroke="#e6e6e6" stroke-width="1.2"/><line x1="964.89" y1="584.96" x2="966.70" y2="583.70" stroke="#bdbdbd" stroke-width="1.1"/><line x1="962.05" y1="594.45" x2="969.85" y2="589.95" stroke="#e6e6e6" stroke-width="1.2"/><line x1="971.69" y1="596.74" x2="973.69" y2="595.81" stroke="#bdbdbd" stroke-width="1.1"/><line x1="967.25" y1="605.59" x2="975.71" y2="602.51" stroke="#e6e6e6" stroke-width="1.2"/><line x1="976.34" y1="609.51" x2="978.47" y2="608.94" stroke="#bdbdbd" stroke-width="1.1"/><line x1="970.43" y1="617.46" x2="979.29" y2="615.89" stroke="#e6e6e6" stroke-width="1.2"/><line x1="978.70" y1="622.90" x2="980.89" y2="622.71" stroke="#bdbdbd" stroke-width="1.1"/><line x1="971.50" y1="629.70" x2="980.50" y2="629.70" stroke="#e6e6e6" stroke-width="1.2"/><line x1="978.70" y1="636.50" x2="980.89" y2="636.69" stroke="#bdbdbd" stroke-width="1.1"/><line x1="970.43" y1="641.94" x2="979.29" y2="643.51" stroke="#e6e6e6" stroke-width="1.2"/><line x1="976.34" y1="649.89" x2="978.47" y2="650.46" stroke="#bdbdbd" stroke-width="1.1"/><line x1="967.25" y1="653.81" x2="975.71" y2="656.89" stroke="#e6e6e6" stroke-width="1.2"/><line x1="971.69" y1="662.66" x2="973.69" y2="663.59" stroke="#bdbdbd" stroke-width="1.1"/><line x1="962.05" y1="664.95" x2="969.85" y2="669.45" stroke="#e6e6e6" stroke-width="1.2"/><line x1="964.89" y1="674.44" x2="966.70" y2="675.70" stroke="#bdbdbd" stroke-width="1.1"/><line x1="955.01" y1="675.02" x2="961.90" y2="680.80" stroke="#e6e6e6" stroke-width="1.2"/><line x1="956.15" y1="684.85" x2="957.71" y2="686.41" stroke="#bdbdbd" stroke-width="1.1"/><line x1="946.32" y1="683.71" x2="952.10" y2="690.60" stroke="#e6e6e6" stroke-width="1.2"/><line x1="945.74" y1="693.59" x2="947.00" y2="695.40" stroke="#bdbdbd" stroke-width="1.1"/><line x1="936.25" y1="690.75" x2="940.75" y2="698.55" stroke="#e6e6e6" stroke-width="1.2"/><line x1="933.96" y1="700.39" x2="934.89" y2="702.39" stroke="#bdbdbd" stroke-width="1.1"/><line x1="925.11" y1="695.95" x2="928.19" y2="704.41" stroke="#e6e6e6" stroke-width="1.2"/><line x1="921.19" y1="705.04" x2="921.76" y2="707.17" stroke="#bdbdbd" stroke-width="1.1"/><line x1="913.24" y1="699.13" x2="914.81" y2="707.99" stroke="#e6e6e6" stroke-width="1.2"/><line x1="907.80" y1="707.40" x2="907.99" y2="709.59" stroke="#bdbdbd" stroke-width="1.1"/><line x1="901.00" y1="700.20" x2="901.00" y2="709.20" stroke="#e6e6e6" stroke-width="1.2"/><line x1="894.20" y1="707.40" x2="894.01" y2="709.59" stroke="#bdbdbd" stroke-width="1.1"/><line x1="888.76" y1="699.13" x2="887.19" y2="707.99" stroke="#e6e6e6" stroke-width="1.2"/><line x1="880.81" y1="705.04" x2="880.24" y2="707.17" stroke="#bdbdbd" stroke-width="1.1"/><line x1="876.89" y1="695.95" x2="873.81" y2="704.41" stroke="#e6e6e6" stroke-width="1.2"/><line x1="868.04" y1="700.39" x2="867.11" y2="702.39" stroke="#bdbdbd" stroke-width="1.1"/><line x1="865.75" y1="690.75" x2="861.25" y2="698.55" stroke="#e6e6e6" stroke-width="1.2"/><line x1="856.26" y1="693.59" x2="855.00" y2="695.40" stroke="#bdbdbd" stroke-width="1.1"/><line x1="855.68" y1="683.71" x2="849.90" y2="690.60" stroke="#e6e6e6" stroke-width="1.2"/><line x1="845.85" y1="684.85" x2="844.29" y2="686.41" stroke="#bdbdbd" stroke-width="1.1"/><line x1="846.99" y1="675.02" x2="840.10" y2="680.80" stroke="#e6e6e6" stroke-width="1.2"/><line x1="837.11" y1="674.44" x2="835.30" y2="675.70" stroke="#bdbdbd" stroke-width="1.1"/><line x1="839.95" y1="664.95" x2="832.15" y2="669.45" stroke="#e6e6e6" stroke-width="1.2"/><line x1="830.31" y1="662.66" x2="828.31" y2="663.59" stroke="#bdbdbd" stroke-width="1.1"/><line x1="834.75" y1="653.81" x2="826.29" y2="656.89" stroke="#e6e6e6" stroke-width="1.2"/><line x1="825.66" y1="649.89" x2="823.53" y2="650.46" stroke="#bdbdbd" stroke-width="1.1"/><line x1="831.57" y1="641.94" x2="822.71" y2="643.51" stroke="#e6e6e6" stroke-width="1.2"/><line x1="823.30" y1="636.50" x2="821.11" y2="636.69" stroke="#bdbdbd" stroke-width="1.1"/><line x1="830.50" y1="629.70" x2="821.50" y2="629.70" stroke="#e6e6e6" stroke-width="1.2"/><line x1="823.30" y1="622.90" x2="821.11" y2="622.71" stroke="#bdbdbd" stroke-width="1.1"/><line x1="831.57" y1="617.46" x2="822.71" y2="615.89" stroke="#e6e6e6" stroke-width="1.2"/><line x1="825.66" y1="609.51" x2="823.53" y2="608.94" stroke="#bdbdbd" stroke-width="1.1"/><line x1="834.75" y1="605.59" x2="826.29" y2="602.51" stroke="#e6e6e6" stroke-width="1.2"/><line x1="830.31" y1="596.74" x2="828.31" y2="595.81" stroke="#bdbdbd" stroke-width="1.1"/><line x1="839.95" y1="594.45" x2="832.15" y2="589.95" stroke="#e6e6e6" stroke-width="1.2"/><line x1="837.11" y1="584.96" x2="835.30" y2="583.70" stroke="#bdbdbd" stroke-width="1.1"/><line x1="846.99" y1="584.38" x2="840.10" y2="578.60" stroke="#e6e6e6" stroke-width="1.2"/><line x1="845.85" y1="574.55" x2="844.29" y2="572.99" stroke="#bdbdbd" stroke-width="1.1"/><line x1="855.68" y1="575.69" x2="849.90" y2="568.80" stroke="#e6e6e6" stroke-width="1.2"/><line x1="856.26" y1="565.81" x2="855.00" y2="564.00" stroke="#bdbdbd" stroke-width="1.1"/><line x1="865.75" y1="568.65" x2="861.25" y2="560.85" stroke="#e6e6e6" stroke-width="1.2"/><line x1="868.04" y1="559.01" x2="867.11" y2="557.01" stroke="#bdbdbd" stroke-width="1.1"/><line x1="876.89" y1="563.45" x2="873.81" y2="554.99" stroke="#e6e6e6" stroke-width="1.2"/><line x1="880.81" y1="554.36" x2="880.24" y2="552.23" stroke="#bdbdbd" stroke-width="1.1"/><line x1="888.76" y1="560.27" x2="887.19" y2="551.41" stroke="#e6e6e6" stroke-width="1.2"/><line x1="894.20" y1="552.00" x2="894.01" y2="549.81" stroke="#bdbdbd" stroke-width="1.1"/><text x="897" y="685.6" text-anchor="middle" font-size="11.8" font-weight="bold" fill="#e4e4e4">-181.52</text><text x="928.3" y="685.6" text-anchor="middle" font-size="11.8" font-weight="bold" fill="#2a9df4">0.02</text><rect x="900.2" y="690.3" width="2" height="10.5" fill="#2a9df4"/><circle cx="901" cy="705" r="4" fill="url(#rd)"/><g transform="translate(883.72,562.90) rotate(-14.5)" fill="none" stroke-linecap="round" stroke-linejoin="round"><polyline points="4.4,9.2 0,1.2 -4.4,9.2" stroke="#1d63ea" stroke-width="4.2"/><line x1="0.6" y1="2.2" x2="4.3" y2="9" stroke="#4a95ff" stroke-width="1.9"/><line x1="-0.9" y1="2.8" x2="-4.3" y2="9" stroke="#edf6ff" stroke-width="2.1"/></g><rect x="976.4" y="673.5" width="10.8" height="40.799999999999955" fill="#888" stroke="#111" stroke-width="1"/><rect x="976.9" y="686.6" width="9.8" height="27.199999999999932" fill="#b20000"/></svg>
</body></html>
